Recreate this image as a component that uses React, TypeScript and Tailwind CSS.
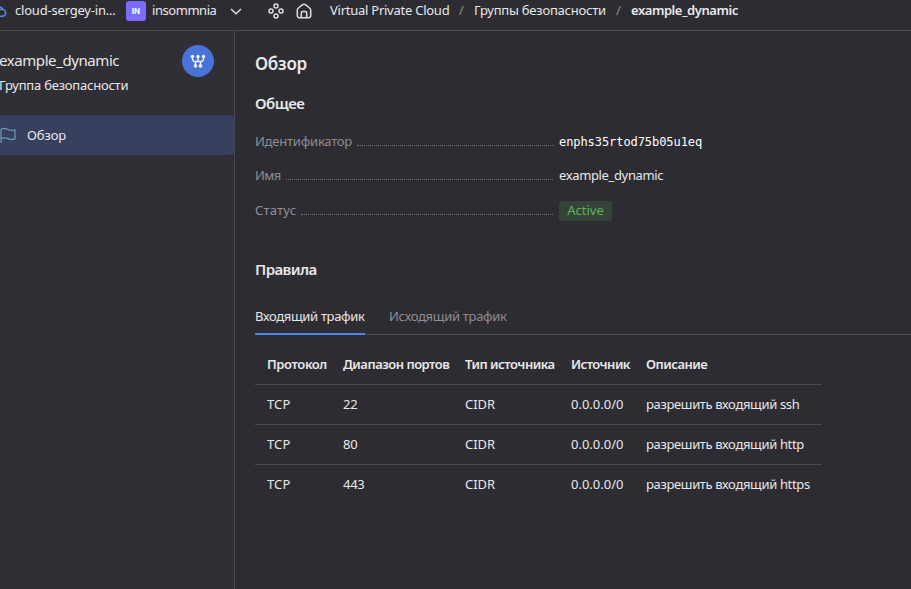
import React from "react";

const rules = [
  { port: "22", text: "разрешить входящий ssh" },
  { port: "80", text: "разрешить входящий http" },
  { port: "443", text: "разрешить входящий https" },
];

function CloudIcon() {
  return (
    <svg className="-ml-[9px] h-4 w-4 shrink-0" viewBox="0 0 16 16" fill="none" stroke="#5b86e5" strokeWidth="1.5">
      <path d="M4 13.2a3.2 3.2 0 0 1-.6-6.3A4.4 4.4 0 0 1 11.8 6.600a3.350 3.350 0 0 1 .2 6.600zM8 7.200c1-.9 2.200-1.100 3.700-.6" />
    </svg>
  );
}

function ServicesIcon() {
  return (
    <svg className="h-4 w-4 shrink-0" viewBox="0 0 16 16" fill="none" stroke="#dededf" strokeWidth="1.5">
      <circle cx="8" cy="3" r="2" />
      <circle cx="3" cy="8" r="2" />
      <circle cx="13" cy="8" r="2" />
      <circle cx="8" cy="13" r="2" />
    </svg>
  );
}

function HomeIcon() {
  return (
    <svg className="h-4 w-4 shrink-0" viewBox="0 0 16 16" fill="none" stroke="#dededf" strokeWidth="1.5">
      <path d="M1.300 7.200c0-.9.400-1.700 1.100-2.200L6.600 1.700a2.300 2.300 0 0 1 2.800 0L13.600 5c.7.500 1.100 1.300 1.100 2.200v5.300a2.300 2.300 0 0 1-2.300 2.300H3.600a2.300 2.300 0 0 1-2.300-2.300z" />
      <path d="M5.300 14.700V10a1.500 1.500 0 0 1 1.500-1.500h2.400a1.500 1.500 0 0 1 1.500 1.500v4.700" />
    </svg>
  );
}

function GroupIcon() {
  return (
    <svg className="h-4 w-4" viewBox="0 0 16 16" fill="none" stroke="#f0f4ff" strokeWidth="1.400">
      <path d="M2.500 3.400v3.400l1.600 1.700h7.800l1.600-1.700V3.400M8 3.400v5M5.500 8.400v4.500M10.500 8.400v4.500" />
      <g fill="#f0f4ff" stroke="none">
        <circle cx="2.500" cy="3.500" r="1.700" />
        <circle cx="8" cy="3.500" r="1.700" />
        <circle cx="13.500" cy="3.500" r="1.700" />
        <circle cx="5.500" cy="12.900" r="1.800" />
        <circle cx="10.500" cy="12.900" r="1.800" />
      </g>
    </svg>
  );
}

function FlagIcon() {
  return (
    <svg className="h-4 w-4 shrink-0" viewBox="0 0 16 16" fill="none" stroke="#6f93b0" strokeWidth="1.300" strokeLinejoin="round" strokeLinecap="round">
      <path d="M1 15.400V2.300C3.300 1 5.400 1.200 8 2.500s4.500 1.200 7 .3v9c-2.500 1.100-4.500 1.100-7-.1s-4.500-1.200-7-.1" />
    </svg>
  );
}

function Row({ label, children }: { label: React.ReactNode; children: React.ReactNode }) {
  return (
    <div className="flex h-5">
      <div className="mr-1.5 flex w-[298px] text-[#8f8e92]">
        {label}
        <span className="mb-[5px] ml-[5px] flex-1 self-end border-b border-dotted border-[#77767a]" />
      </div>
      {children}
    </div>
  );
}

export default function App() {
  return (
    <div className="flex h-[589px] w-[911px] flex-col overflow-hidden whitespace-nowrap bg-[#2d2c33] font-['Noto_Sans',sans-serif] text-[13px] leading-5 text-[#e8e8e9]">
      <header className="flex h-[31px] shrink-0 items-start border-b border-[#4b4a50]">
        <div className="flex h-[22px] items-center">
          <CloudIcon />
          <span className="-mt-0.5 ml-2 w-[111px] tracking-[-0.2px]">cloud-sergey-in...</span>
          <span className="flex h-5 w-5 items-center justify-center rounded-[3px] bg-[#7c6bff] font-['Inter',sans-serif] text-[8px] font-bold text-white">IN</span>
          <span className="-mt-0.5 ml-1.5 w-[78px] tracking-[-0.45px]">insommnia</span>
          <svg className="h-4 w-3" viewBox="0 0 12 16" fill="none" stroke="#dededf" strokeWidth="1.500">
            <path d="M1 6l5 4.700L11 6" />
          </svg>
          <span className="ml-[26px]"><ServicesIcon /></span>
          <span className="ml-3"><HomeIcon /></span>
          <span className="-mt-0.5 ml-[18px] w-[129px] tracking-[-0.25px]">Virtual Private Cloud</span>
          <span className="-mt-0.5 w-[15px] text-[#8f8e92]">/</span>
          <span className="-mt-0.5 w-[142px] tracking-[-0.22px]">Группы безопасности</span>
          <span className="-mt-0.5 w-[15px] text-[#8f8e92]">/</span>
          <span className="-mt-0.5 font-semibold tracking-[-0.45px]">example_dynamic</span>
        </div>
      </header>
      <div className="flex min-h-0 flex-1">
        <aside className="w-[235px] shrink-0 border-r border-[#4b4a50] bg-[#302f35]">
          <div className="flex h-[84px] justify-between pr-5 pt-[14px]">
            <div className="-ml-px pt-[5px]">
              <div className="text-[15px] tracking-[-0.42px]">example_dynamic</div>
              <div className="mt-[5px] tracking-[-0.22px]">Группа безопасности</div>
            </div>
            <div className="flex h-8 w-8 items-center justify-center rounded-full bg-[#4a72d8]"><GroupIcon /></div>
          </div>
          <div className="flex h-10 items-center rounded-r-sm bg-[#38405f]">
            <FlagIcon />
            <span className="ml-[11px] tracking-[-0.1px]">Обзор</span>
          </div>
        </aside>
        <main className="min-w-0 flex-1 pl-5">
          <h1 className="mt-[21px] text-[17px] font-semibold leading-6 tracking-[-0.25px]">Обзор</h1>
          <h2 className="mt-[17px] text-[15px] font-semibold leading-5 tracking-[-0.5px]">Общее</h2>
          <div className="mt-[18px]">
            <Row label={<span className="tracking-[-0.22px]">Идентификатор</span>}>
              <span className="pt-px font-['DejaVu_Sans_Mono',monospace] text-[12px] tracking-[-0.07px] text-white">enphs35rtod75b05u1eq</span>
            </Row>
          </div>
          <div className="mt-[14px]">
            <Row label={<span className="tracking-[-0.5px]">Имя</span>}>
              <span className="tracking-[-0.36px]">example_dynamic</span>
            </Row>
          </div>
          <div className="mt-[15px]">
            <Row label={<span className="tracking-[0.2px]">Статус</span>}>
              <span className="relative top-px flex h-5 w-[53px] justify-center rounded-[3px] bg-[#364339] leading-[18px] text-[#5bb557]">Active</span>
            </Row>
          </div>
          <h2 className="mt-[39px] text-[15px] font-semibold leading-5 tracking-[-0.6px]">Правила</h2>
          <div className="mt-5 flex h-9 gap-6 border-b border-[#4b4a50]">
            <div className="flex h-9 w-[110px] items-center border-b-2 border-[#4d84f5] tracking-[-0.33px]">Входящий трафик</div>
            <div className="flex h-[34px] items-center tracking-[-0.3px] text-[#8f8e92]">Исходящий трафик</div>
          </div>
          <table className="mt-[9px] w-[567px] table-fixed border-collapse">
            <colgroup>
              <col className="w-[76px]" />
              <col className="w-[122px]" />
              <col className="w-[106px]" />
              <col className="w-[75px]" />
              <col className="w-[188px]" />
            </colgroup>
            <thead>
              <tr className="h-10 border-b border-[#4b4a50] text-left">
                <th className="p-0 pl-3 font-semibold tracking-[-0.4px]">Протокол</th>
                <th className="p-0 pl-3 font-semibold tracking-[-0.5px]">Диапазон портов</th>
                <th className="p-0 pl-3 font-semibold tracking-[-0.5px]">Тип источника</th>
                <th className="p-0 pl-3 font-semibold tracking-[-0.55px]">Источник</th>
                <th className="p-0 pl-3 font-semibold tracking-[-0.5px]">Описание</th>
              </tr>
            </thead>
            <tbody>
              {rules.map((r) => (
                <tr key={r.port} className="h-10 border-b border-[#4b4a50] last:border-b-0">
                  <td className="p-0 pl-3 tracking-[0.15px]">TCP</td>
                  <td className="p-0 pl-3 tracking-[-0.25px]">{r.port}</td>
                  <td className="p-0 pl-3">CIDR</td>
                  <td className="p-0 pl-3">0.0.0.0/0</td>
                  <td className="p-0 pl-3 tracking-[-0.34px]">{r.text}</td>
                </tr>
              ))}
            </tbody>
          </table>
        </main>
      </div>
    </div>
  );
}
